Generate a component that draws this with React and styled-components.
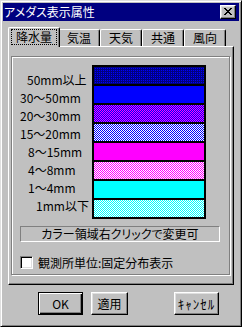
import React from 'react';
import styled, { createGlobalStyle } from 'styled-components';

const GlobalStyle = createGlobalStyle`
  html, body {
    margin: 0;
    padding: 0;
    background: #c0c0c0;
  }
  body {
    font-family: "Noto Sans CJK JP", "Noto Sans", sans-serif;
    font-size: 12px;
    color: #000;
  }
`;

const Window = styled.div`
  width: 242px;
  height: 327px;
  box-sizing: border-box;
  background: #c0c0c0;
  border: 1px solid;
  border-color: #dfdfdf #000 #000 #dfdfdf;
  box-shadow: inset 1px 1px #fff, inset -1px -1px #808080;
  padding: 2px;
  display: flex;
  flex-direction: column;
`;

const TitleBar = styled.div`
  height: 18px;
  background: #000080;
  display: flex;
  align-items: center;
  padding: 0 3px 0 1px;
`;

const Title = styled.span`
  flex: 1;
  color: #fff;
  font-size: 12px;
  line-height: 18px;
  font-feature-settings: "palt";
  white-space: nowrap;
`;

const CloseBtn = styled.div`
  width: 16px;
  height: 14px;
  box-sizing: border-box;
  background: #c0c0c0;
  border: 1px solid;
  border-color: #fff #000 #000 #fff;
  box-shadow: inset -1px -1px #808080, inset 1px 1px #dfdfdf;
  display: flex;
  align-items: center;
  justify-content: center;
  padding-bottom: 1px;
`;

const Body = styled.div`
  padding: 0 5px;
`;

const TabRow = styled.div`
  margin-top: 6px;
  height: 19px;
  display: flex;
  align-items: flex-end;
  padding-left: 2px;
`;

const Tab = styled.div`
  position: relative;
  box-sizing: border-box;
  width: ${p => (p.$active ? p.$w + 4 : p.$w)}px;
  height: ${p => (p.$active ? 20 : 17)}px;
  margin: ${p => (p.$active ? '0 -2px -1px' : '0')};
  z-index: ${p => (p.$active ? 2 : 1)};
  background: #c0c0c0;
  border-top: 1px solid #fff;
  border-left: 1px solid #fff;
  border-right: 1px solid #000;
  border-radius: 2px 2px 0 0;
  box-shadow: inset -1px 0 #808080;
  display: flex;
  align-items: ${p => (p.$active ? 'flex-start' : 'center')};
  justify-content: center;
  font-size: 12px;
  line-height: 14px;
  padding-top: ${p => (p.$active ? '1px' : '0')};
`;

const Focus = styled.span`
  box-sizing: border-box;
  width: 46px;
  height: 16px;
  border: 1px dotted #000;
  display: flex;
  align-items: center;
  justify-content: center;
`;

const Panel = styled.div`
  box-sizing: border-box;
  height: 239px;
  border: 1px solid;
  border-color: #fff #000 #000 #fff;
  box-shadow: inset -1px -1px #808080;
  padding: 9px 3px 9px 2px;
  display: flex;
  flex-direction: column;
`;

const Frame = styled.div`
  flex: 1;
  border: 1px solid #808080;
  box-shadow: inset 1px 1px #fff, 1px 1px #fff;
  display: flex;
  flex-direction: column;
`;

const Legend = styled.div`
  display: flex;
  padding-top: 8px;
`;

const LabelCol = styled.div`
  width: 80px;
  padding-top: 6px;
  display: flex;
  flex-direction: column;
`;

const Label = styled.div`
  height: 18px;
  line-height: 18px;
  padding-left: ${p => p.$indent}px;
  white-space: nowrap;
`;

const SwatchCol = styled.div`
  width: 114px;
  box-sizing: border-box;
  border: 2px solid #000;
  display: flex;
  flex-direction: column;
`;

const SwatchBox = styled.div`
  height: 17px;
  background: ${p => p.$color};
  & + & {
    border-top: 2px solid #000;
  }
  svg {
    display: block;
  }
`;

const Note = styled.div`
  margin: 7px 9px 0 8px;
  height: 16px;
  box-sizing: border-box;
  border: 1px solid;
  border-color: #808080 #fff #fff #808080;
  text-align: center;
  line-height: 14px;
  font-feature-settings: "palt";
`;

const CheckRow = styled.label`
  margin: 14px 0 0 8px;
  display: flex;
  align-items: center;
  gap: 5px;
  line-height: 13px;
`;

const CheckBox = styled.span`
  width: 13px;
  height: 13px;
  box-sizing: border-box;
  background: #fff;
  border: 1px solid;
  border-color: #808080 #fff #fff #808080;
  box-shadow: inset 1px 1px #000, inset -1px -1px #dfdfdf;
`;

const ButtonRow = styled.div`
  margin-top: 7px;
  display: flex;
  gap: 8px;
  padding: 0 20px 0 35px;
`;

const Button = styled.button`
  width: ${p => p.$w}px;
  height: 23px;
  box-sizing: border-box;
  padding: 0;
  background: #c0c0c0;
  font-family: inherit;
  font-size: ${p => p.$size || 12}px;
  letter-spacing: ${p => p.$spacing || 0}px;
  color: #000;
  border: 1px solid;
  border-color: ${p => (p.$default ? '#000' : '#fff #000 #000 #fff')};
  box-shadow: ${p =>
    p.$default
      ? 'inset 1px 1px #fff, inset -1px -1px #000, inset -2px -2px #808080'
      : 'inset -1px -1px #808080, inset 1px 1px #dfdfdf'};
  margin-left: ${p => (p.$push ? 'auto' : '0')};
`;

const CloseGlyph = () => (
  <svg width="8" height="7" viewBox="0 0 8 7" shapeRendering="crispEdges">
    <path
      fill="#000"
      d="M0 0h2v1H0zM6 0h2v1H6zM1 1h2v1H1zM5 1h2v1H5zM2 2h4v1H2zM3 3h2v1H3zM2 4h4v1H2zM1 5h2v1H1zM5 5h2v1H5zM0 6h2v1H0zM6 6h2v1H6z"
    />
  </svg>
);

// a: base colour, b: dither colour; sparse puts b on one pixel in four
function Swatch({ id, a, b, sparse }) {
  return (
    <SwatchBox $color={a}>
      {b && (
        <svg width="100%" height="17" shapeRendering="crispEdges">
          <defs>
            <pattern id={id} width="2" height="2" patternUnits="userSpaceOnUse">
              {sparse ? (
                <rect x="1" y="1" width="1" height="1" fill={b} />
              ) : (
                <>
                  <rect width="1" height="1" fill={b} />
                  <rect x="1" y="1" width="1" height="1" fill={b} />
                </>
              )}
            </pattern>
          </defs>
          <rect width="100%" height="100%" fill={`url(#${id})`} />
        </svg>
      )}
    </SwatchBox>
  );
}

const tabs = [
  { name: '降水量', w: 48, active: true },
  { name: '気温', w: 42 },
  { name: '天気', w: 42 },
  { name: '共通', w: 42 },
  { name: '風向', w: 42 },
];

const ranges = [
  { label: '50mm以上', indent: 15, a: '#000080', b: '#0000ff', sparse: true },
  { label: '30～50mm', indent: 8, a: '#0000ff' },
  { label: '20～30mm', indent: 8, a: '#ff00ff', b: '#0000ff' },
  { label: '15～20mm', indent: 8, a: '#ffffff', b: '#0000ff' },
  { label: '8～15mm', indent: 16, a: '#ff00ff' },
  { label: '4～8mm', indent: 16, a: '#ffffff', b: '#ff00ff' },
  { label: '1～4mm', indent: 16, a: '#00ffff' },
  { label: '1mm以下', indent: 24, a: '#ffffff', b: '#00ffff' },
];

export default function App() {
  return (
    <>
      <GlobalStyle />
      <Window>
        <TitleBar>
          <Title>アメダス表示属性</Title>
          <CloseBtn>
            <CloseGlyph />
          </CloseBtn>
        </TitleBar>
        <Body>
          <TabRow>
            {tabs.map(t => (
              <Tab key={t.name} $w={t.w} $active={t.active}>
                {t.active ? <Focus>{t.name}</Focus> : t.name}
              </Tab>
            ))}
          </TabRow>
          <Panel>
            <Frame>
              <Legend>
                <LabelCol>
                  {ranges.map(r => (
                    <Label key={r.label} $indent={r.indent}>{r.label}</Label>
                  ))}
                </LabelCol>
                <SwatchCol>
                  {ranges.map((r, i) => (
                    <Swatch key={r.label} id={`pat${i}`} a={r.a} b={r.b} sparse={r.sparse} />
                  ))}
                </SwatchCol>
              </Legend>
              <Note>カラー領域右クリックで変更可</Note>
              <CheckRow>
                <CheckBox />
                <span>観測所単位:固定分布表示</span>
              </CheckRow>
            </Frame>
          </Panel>
        </Body>
        <ButtonRow>
          <Button $w={45} $default>OK</Button>
          <Button $w={37}>適用</Button>
          <Button $w={45} $push $size={13} $spacing={1}>ｷｬﾝｾﾙ</Button>
        </ButtonRow>
      </Window>
    </>
  );
}
